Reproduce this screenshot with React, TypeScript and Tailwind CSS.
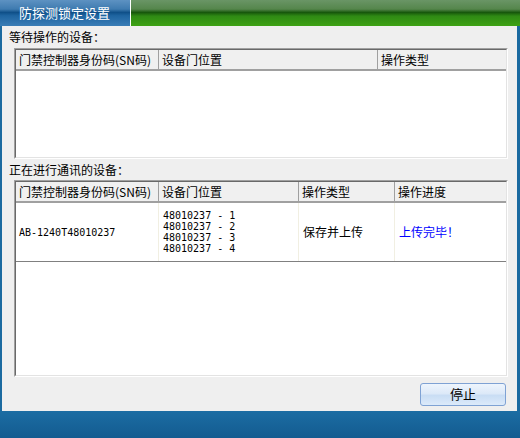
import React from "react";

const cjk = "font-['SimSun','Noto_Sans_CJK_SC',sans-serif]";
const mono = "font-['DejaVu_Sans_Mono','Liberation_Mono',monospace]";

type Col = { label: string; width: string };

const waitCols: Col[] = [
  { label: "门禁控制器身份码(SN码)", width: "w-[143px]" },
  { label: "设备门位置", width: "w-[219px]" },
  { label: "操作类型", width: "flex-1" },
];

const runCols: Col[] = [
  { label: "门禁控制器身份码(SN码)", width: "w-[143px]" },
  { label: "设备门位置", width: "w-[140px]" },
  { label: "操作类型", width: "w-[96px]" },
  { label: "操作进度", width: "flex-1" },
];

const HeaderRow = ({ cols }: { cols: Col[] }) => (
  <div className="flex h-[21px] shrink-0 bg-[#f0f0f0] border-b-2 border-[#a0a0a0]">
    {cols.map((c, i) => (
      <div
        key={c.label + i}
        className={`${c.width} flex items-center pl-[3px] text-[12px] text-black ${
          i < cols.length - 1 ? "border-r border-[#a0a0a0]" : ""
        }`}
      >
        {c.label}
      </div>
    ))}
  </div>
);

const Table = ({ cols, children, height }: { cols: Col[]; children?: React.ReactNode; height: string }) => (
  <div className={`${height} border-t border-l border-[#a0a0a0] border-b border-r border-b-white border-r-white`}>
    <div className="h-full flex flex-col bg-white border-t border-l border-[#696969] border-b border-r border-b-[#e3e3e3] border-r-[#e3e3e3]">
      <HeaderRow cols={cols} />
      {children}
    </div>
  </div>
);

export default function App() {
  return (
    <div className={`w-[520px] h-[438px] flex flex-col bg-[#1b6aa0] ${cjk}`}>
      {/* title bar */}
      <div className="h-[26px] flex shrink-0">
        <div className="w-[130px] flex items-center pl-[19px] text-white text-[13px] bg-[linear-gradient(to_bottom,#5d92c2_0%,#3f7bb0_35%,#0f5089_48%,#1e64a0_60%,#3a7db6_100%)]">
          防探测锁定设置
        </div>
        <div className="w-px bg-white" />
        <div className="flex-1 bg-[linear-gradient(to_bottom,#6a9566_0%,#55864c_35%,#17570c_48%,#2f8a14_62%,#3ea214_100%)]" />
      </div>

      {/* content */}
      <div className="h-[385px] ml-[2px] mr-[3px] bg-[#efefef] flex flex-col pl-[12px] pr-[9px] text-[12px] text-black">
        <div className="h-[22px] flex items-center -ml-[5px]">等待操作的设备：</div>
        <Table cols={waitCols} height="h-[111px]" />

        <div className="h-[21px] flex items-center -ml-[5px]">正在进行通讯的设备：</div>
        <Table cols={runCols} height="h-[197px]">
          <div className="flex h-[59px] shrink-0 border-b border-[#808080]">
            <div className={`w-[143px] flex items-center pl-[3px] ${mono} text-[10px] border-r border-[#f1efe2]`}>
              AB-1240T48010237
            </div>
            <div className={`w-[140px] flex flex-col justify-center pl-[4px] ${mono} text-[10px] leading-[11px] border-r border-[#f1efe2]`}>
              <span>48010237 - 1</span>
              <span>48010237 - 2</span>
              <span>48010237 - 3</span>
              <span>48010237 - 4</span>
            </div>
            <div className="w-[96px] flex items-center pl-[4px] border-r border-[#f1efe2]">保存并上传</div>
            <div className="flex-1 flex items-center pl-[4px] text-[#0000ff]">上传完毕！</div>
          </div>
        </Table>

        <div className="flex-1 flex items-center justify-end pr-[2px]">
          <button className="w-[86px] h-[23px] rounded-[3px] border border-[#7fa2d4] text-[13px] text-black bg-[linear-gradient(to_bottom,#eef5fd_0%,#dde9f8_45%,#c9ddf4_55%,#dceafa_100%)]">
            停止
          </button>
        </div>
      </div>

      {/* bottom band */}
      <div className="flex-1 bg-[linear-gradient(to_bottom,#1c6da3,#135b90)]" />
    </div>
  );
}
